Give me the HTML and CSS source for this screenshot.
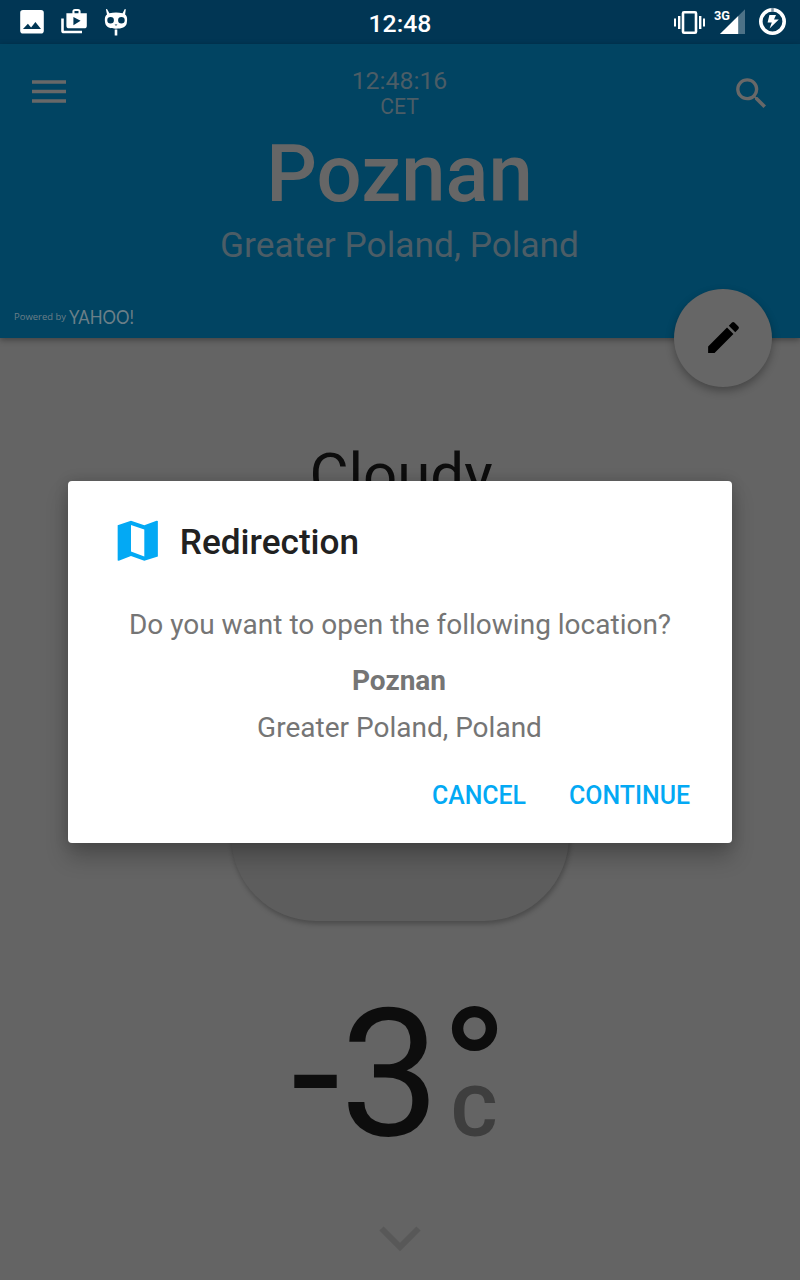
FILE: index.html
```
<!DOCTYPE html>
<html lang="en">
<head>
<meta charset="utf-8">
<title>Weather</title>
<link rel="stylesheet" href="styles.css">
</head>
<body>
<div class="status">
  <svg class="status-left" width="140" height="44" viewBox="0 0 140 44" fill="#fff">
    <path fill-rule="evenodd" d="M23 10h18a2.8 2.8 0 0 1 2.8 2.8v18a2.8 2.8 0 0 1-2.8 2.8H23a2.8 2.8 0 0 1-2.8-2.8v-18A2.8 2.8 0 0 1 23 10zm0 19h18l-5.600-7-4.300 5.400-3.200-3.600z"/>
    <path fill-rule="evenodd" d="M61.200 18.500h2.600v12.200H82v2.600H63.800a2.600 2.600 0 0 1-2.600-2.600zM66.400 13.200h6V11.500a2.600 2.600 0 0 1 2.600-2.600h3a2.600 2.600 0 0 1 2.600 2.600v1.700h6.200v12.500a2.600 2.600 0 0 1-2.600 2.600H69a2.600 2.600 0 0 1-2.600-2.600zm8.100 0h4v-2.100h-4zm-1.100 3.700v8.400l7.200-4.500z"/>
    <path fill-rule="evenodd" d="M107 9l2.400 4.300q6.600-1.700 13.200 0L124.800 9l1 .3-.7 5.100c2.600 2 2.200 5.600 1.600 9.200-.7 3.500-5 5.200-10.700 5.200s-10-1.700-10.700-5.200c-.6-3.600-1-7.200 1.700-9.200l-1.100-5.100zM110.600 17a3.300 3.300 0 1 0 0 6.600 3.300 3.300 0 0 0 0-6.600zm10.800 0a3.300 3.300 0 1 0 0 6.600 3.300 3.300 0 0 0 0-6.600zM114.500 24.400l1.500 1.300 1.500-1.300zM114.700 29.500h2.600v6h-2.600z"/>
  </svg>
  <span class="clock">12:48</span>
  <svg class="status-right" width="140" height="44" viewBox="660 0 140 44" fill="#fff">
    <path d="M674 18.500h2v8h-2zM678 16h2.400v13H678zM699 16h2.400v13H699zM703 18.500h2v8h-2z"/>
    <rect x="683" y="12.200" width="13" height="20.600" rx="1" fill="none" stroke="#fff" stroke-width="2.600"/>
    <path d="M720 34L745 9.300V34z" opacity=".3"/><path d="M720 34l18.200-18v18z"/>
    <text class="net" x="714" y="20.300" textLength="16" lengthAdjust="spacingAndGlyphs">3G</text>
    <circle cx="772.500" cy="21.500" r="11.700" fill="none" stroke="#fff" stroke-width="3.600"/>
    <path d="M772.500 7.900v3.800" stroke="#8095a5" stroke-width="2.500"/>
    <path d="M769.400 14.900h6.600l-2 4.600h4.800l-9.200 9 2.200-6h-4.200z"/>
  </svg>
</div>
<header class="header">
  <svg class="menu" width="34" height="24" viewBox="0 0 34 24"><path d="M0 2h34M0 11.500h34M0 21h34" stroke="#686868" stroke-width="3.600"/></svg>
  <div class="place">
    <div class="time">12:48:16</div>
    <div class="zone">CET</div>
    <h1 class="city">Poznan</h1>
    <div class="region">Greater Poland, Poland</div>
  </div>
  <svg class="search" width="41" height="41" viewBox="0 0 24 24" fill="#686868"><path d="M15.500 14h-.79l-.28-.27A6.471 6.471 0 0 0 16 9.500 6.500 6.500 0 1 0 9.500 16c1.610 0 3.090-.59 4.230-1.570l.27.28v.79l5 4.990L20.490 19l-4.990-5zm-6 0C7.010 14 5 11.990 5 9.500S7.010 5 9.500 5 14 7.010 14 9.500 11.990 14 9.500 14z"/></svg>
  <svg class="credit" width="130" height="30" viewBox="12 301 130 30">
    <text class="powered" x="14" y="320" textLength="52" lengthAdjust="spacingAndGlyphs">Powered by</text>
    <text class="yahoo" x="69" y="323.500" textLength="65" lengthAdjust="spacingAndGlyphs">YAHOO!</text>
  </svg>
  <div class="fab"><svg width="41" height="41" viewBox="0 0 24 24"><path d="M3 17.250V21h3.750L17.810 9.940l-3.750-3.750L3 17.250zM20.710 7.040a.996.996 0 0 0 0-1.410l-2.340-2.340a.996.996 0 0 0-1.410 0l-1.830 1.830 3.750 3.750 1.830-1.830z"/></svg></div>
</header>
<main class="weather">
  <h2 class="condition">Cloudy</h2>
  <div class="pill"></div>
  <svg class="temp" width="280" height="215" viewBox="260 965 280 215">
    <text class="deg" x="291" y="1134.500">-</text>
    <text class="deg" x="340" y="1134.500">3</text>
    <circle cx="474.500" cy="1028.500" r="16.900" fill="none" stroke="#0d0d0d" stroke-width="11.400"/>
    <text class="unit" x="451" y="1136">C</text>
  </svg>
  <svg class="more" width="42" height="27" viewBox="0 0 42 27"><path d="M2.500 3.500L21 22l18.500-18.500" fill="none" stroke="#585858" stroke-width="6"/></svg>
</main>
<section class="dialog">
  <div class="dialog-head">
    <svg width="53.300" height="53.300" viewBox="0 0 24 24" fill="#03a9f4"><path fill-rule="evenodd" d="M3 5.100L9 3l6 2.100L20.500 3l.6.100v16L15 21l-6-2.100L3.500 21 3 20.900zM9 4.900v12l6 2.200V7z"/></svg>
    <h3 class="dialog-title">Redirection</h3>
  </div>
  <p class="question">Do you want to open the following location?</p>
  <p class="target">Poznan</p>
  <p class="target-region">Greater Poland, Poland</p>
  <div class="actions"><span>CANCEL</span><span>CONTINUE</span></div>
</section>
</body>
</html>
```
FILE: styles.css
```
* { box-sizing: border-box; margin: 0; padding: 0; }
body { width: 800px; height: 1280px; overflow: hidden; position: relative; display: flex; flex-direction: column; background: #646464; font-family: Roboto, sans-serif; }
svg { display: block; flex: none; }
.status { height: 44px; background: #013654; display: grid; grid-template-columns: 140px 1fr 140px; color: #fff; }
.clock { text-align: center; font-size: 24.800px; font-weight: 500; line-height: 48px; }
.net { font: 700 13.500px Roboto, sans-serif; }
.header { position: relative; z-index: 1; height: 294px; background: #014462; display: grid; grid-template-columns: 41px 1fr 41px; align-items: start; padding: 22px 29px 0 32px; box-shadow: 0 2px 6px rgba(0,0,0,.35); }
.menu { margin-top: 14px; }
.search { margin-top: 7px; margin-left: 1px; }
.place { padding-right: 4px; text-align: center; color: #4c5d66; }
.time { font-size: 24.800px; line-height: 30px; }
.zone { font-size: 21.200px; line-height: 22px; }
.city { margin-top: 9px; font-size: 79.600px; line-height: 94px; font-weight: 500; color: #666; }
.region { margin-top: 3px; font-size: 35.300px; line-height: 42px; }
.credit { position: absolute; left: 12px; top: 257px; fill: #6b7f88; }
.powered { font: 9.500px "Open Sans", sans-serif; }
.yahoo { font: 400 19px Lato, sans-serif; }
.fab { position: absolute; left: 674px; top: 245px; width: 98px; height: 98px; border-radius: 50%; background: #666; display: grid; place-items: center; box-shadow: 0 4px 8px rgba(0,0,0,.3); }
.fab svg { margin-bottom: 1px; }
.weather { flex: 1; display: flex; flex-direction: column; align-items: center; }
.condition { margin-top: 101px; padding-left: 2px; font-size: 60px; line-height: 72px; font-weight: 400; color: #0d0d0d; }
.pill { margin-top: 70px; width: 338px; height: 340px; border-radius: 85px; background: #5d5d5d; box-shadow: 1px 3px 5px rgba(0,0,0,.25); }
.temp { margin-top: 44px; }
.deg { font: 400 178px Roboto, sans-serif; fill: #0d0d0d; }
.unit { font: 700 71px Roboto, sans-serif; fill: #3e3e3e; }
.more { margin-top: 45px; }
.dialog { position: absolute; z-index: 2; left: 68px; top: 481px; width: 664px; height: 362px; padding-top: 33px; border-radius: 4px; background: #fff; box-shadow: 0 14px 22px rgba(0,0,0,.24), 0 0 14px rgba(0,0,0,.15); color: #757575; text-align: center; font-size: 28px; line-height: 34px; }
.dialog-head { display: flex; height: 54px; padding-left: 43.200px; align-items: center; gap: 15.300px; }
.dialog-title { padding-top: 2px; font-size: 35.200px; line-height: 42px; font-weight: 500; color: #212121; }
.question { margin-top: 40px; }
.target { margin-top: 22px; padding-right: 2px; font-weight: 700; }
.target-region { margin-top: 13px; padding-right: 1px; }
.actions { display: flex; justify-content: flex-end; gap: 43px; margin-top: 34px; padding-right: 42px; color: #03a9f4; font-size: 24.900px; font-weight: 500; }
```
